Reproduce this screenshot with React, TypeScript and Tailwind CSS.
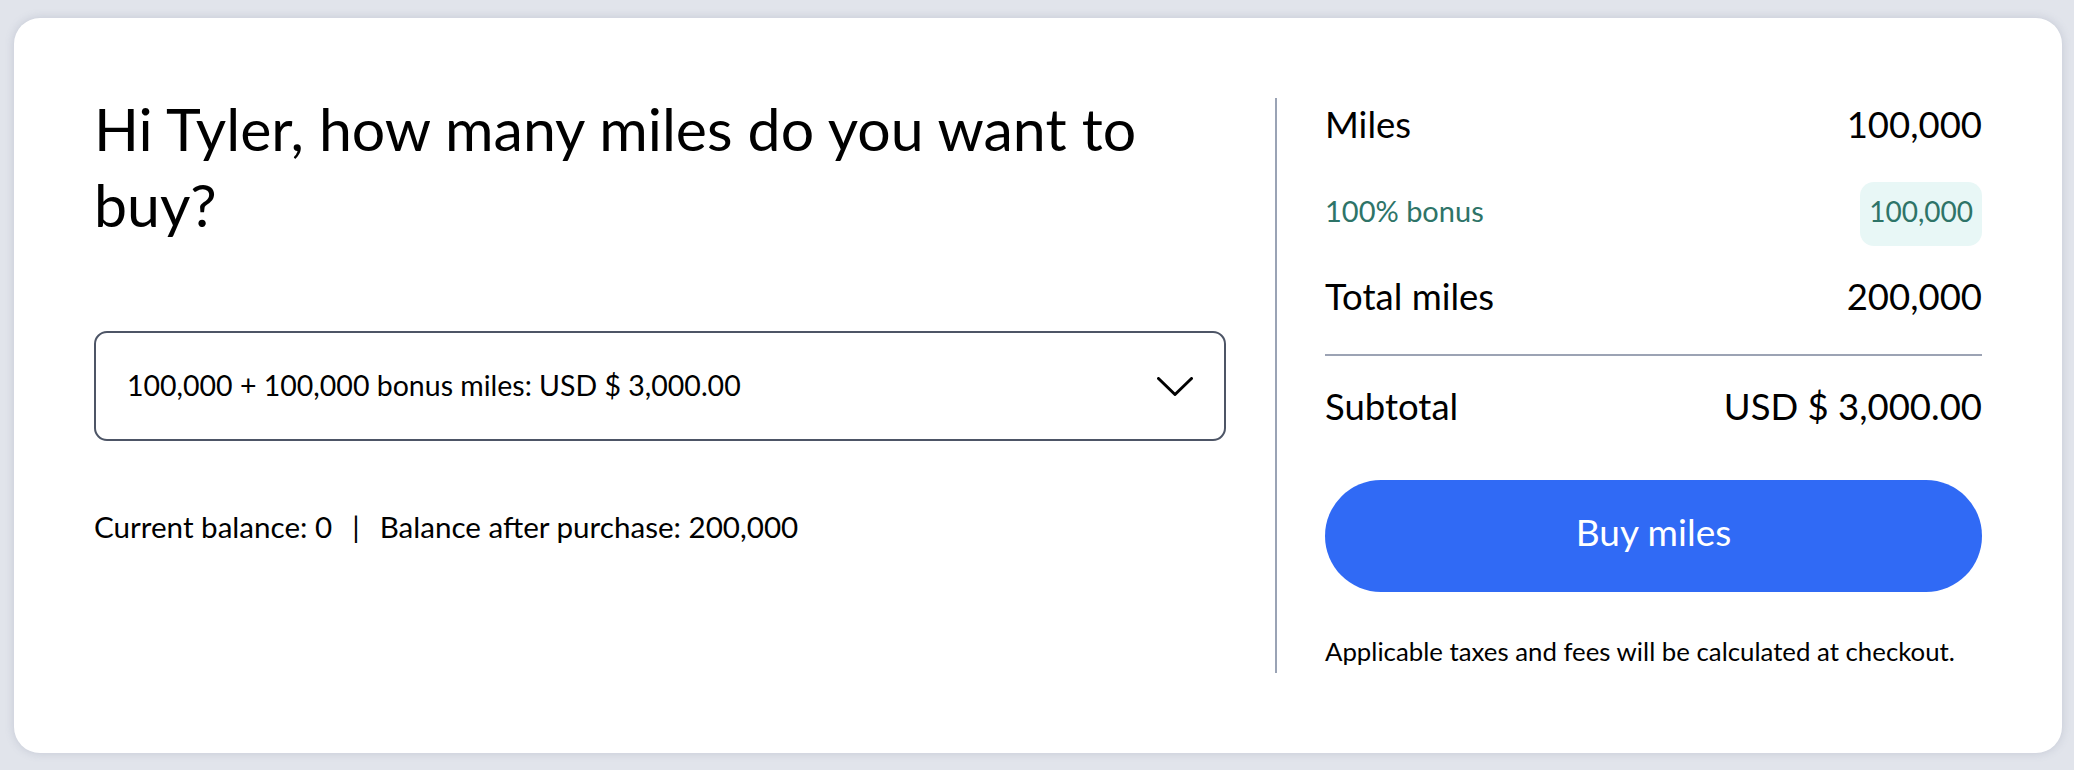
export default function App() {
  return (
    <div className="min-h-[770px] w-full bg-[#e1e4eb] pl-[14px] pr-[12px] pt-[18px] pb-[17px] font-[Lato,sans-serif] text-black">
      <div className="flex rounded-[26px] bg-white p-[80px] shadow-[0_0_10px_rgba(90,100,130,0.22)]">
        <div className="w-[1132px] shrink-0">
          <h1 className="-mt-[7px] text-[59px] leading-[76px] font-normal">
            Hi Tyler, how many miles do you want to
            <br />
            buy?
          </h1>
          <div className="mt-[88px] flex h-[110px] items-center justify-between rounded-[13px] border-2 border-[#4d5566] pl-[31px] pr-[31px]">
            <span className="pb-[3px] text-[28.5px] leading-[32px]">
              100,000 + 100,000 bonus miles: USD $ 3,000.00
            </span>
            <svg width="36" height="19" viewBox="0 0 36 19" aria-hidden="true">
              <path
                d="M1.5 1.5 L18 17.5 L34.5 1.5"
                fill="none"
                stroke="#000"
                strokeWidth="3"
                strokeLinecap="round"
                strokeLinejoin="round"
              />
            </svg>
          </div>
          <p className="mt-[70px] flex text-[29.6px] leading-[32px]">
            <span>Current balance: 0</span>
            <span className="mx-[20px]">|</span>
            <span>Balance after purchase: 200,000</span>
          </p>
        </div>

        <div className="ml-[49px] mr-[48px] w-[2px] shrink-0 bg-[#9aa3b5]" />

        <div className="flex-1 pb-[7px]">
          <div className="mt-[6px] flex justify-between text-[36.5px] leading-[40px]">
            <span>Miles</span>
            <span>100,000</span>
          </div>
          <div className="mt-[38px] flex h-[64px] items-center justify-between text-[#2e7468]">
            <span className="pb-[6px] text-[29px] leading-[34px]">100% bonus</span>
            <span className="flex h-full items-center rounded-[14px] bg-[#e8f7f6] px-[9px] pb-[6px] text-[28px] leading-[34px]">
              100,000
            </span>
          </div>
          <div className="mt-[30px] flex justify-between text-[36.5px] leading-[40px]">
            <span>Total miles</span>
            <span>200,000</span>
          </div>
          <div className="mt-[38px] h-[2px] bg-[#9ca3b4]" />
          <div className="mt-[30px] flex justify-between text-[36.5px] leading-[40px]">
            <span>Subtotal</span>
            <span>USD $ 3,000.00</span>
          </div>
          <button
            type="button"
            className="mt-[54px] flex h-[112px] w-full items-center justify-center rounded-full bg-[#306af5] pb-[9px] text-[37px] leading-[40px] text-white"
          >
            Buy miles
          </button>
          <p className="mt-[44px] text-[25.8px] leading-[30px]">
            Applicable taxes and fees will be calculated at checkout.
          </p>
        </div>
      </div>
    </div>
  );
}
